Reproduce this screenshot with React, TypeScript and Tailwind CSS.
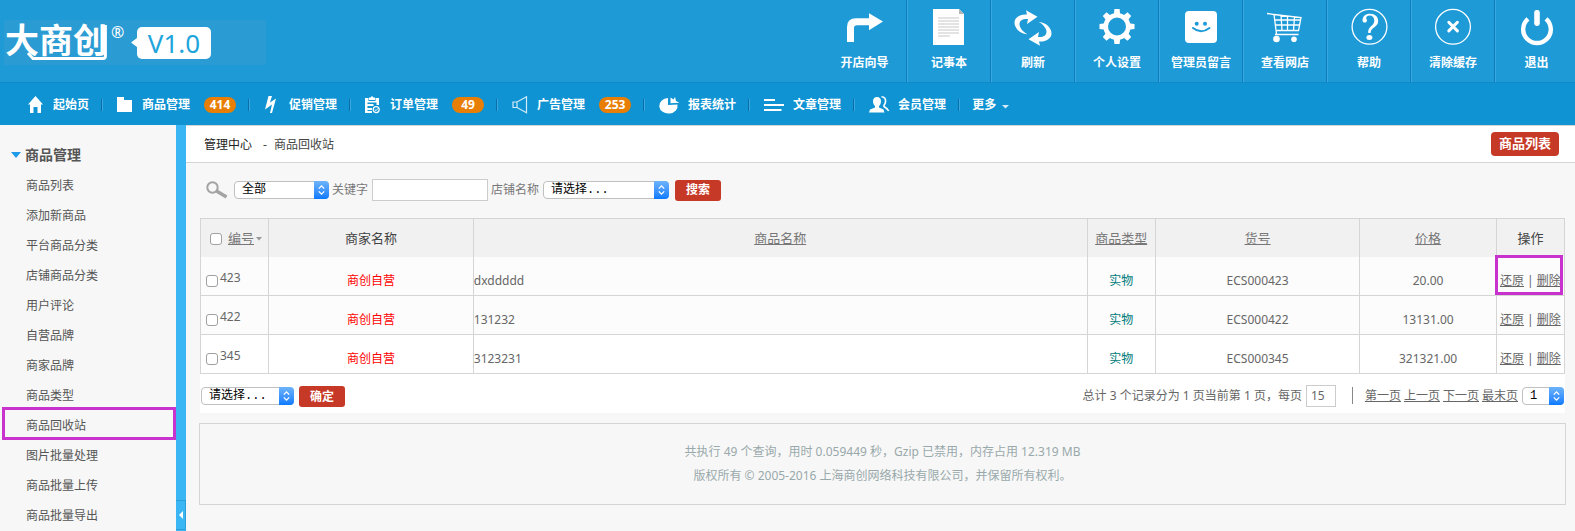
import { useState } from "react";
import type { ReactNode } from "react";

const tools: { label: string; icon: ReactNode }[] = [
  {
    label: "开店向导",
    icon: (
      <path
        fill="#fff"
        d="M0 33V18Q0 9.3 9 9.3H22V4.3L36 12.6L22 21.3V16.3H10Q7 16.3 7 19V33Z"
      />
    ),
  },
  {
    label: "记事本",
    icon: (
      <>
        <path fill="#fff" d="M2 0H28L33 5V36H2Z" />
        <path fill="#b5b5b5" d="M28 0L33 5H28Z" />
        <path
          stroke="#e3e3e3"
          strokeWidth="2"
          d="M7 9H28M7 12H28M7 15H28M7 18H28M7 21H28M7 24H28M7 27H19"
        />
      </>
    ),
  },
  {
    label: "刷新",
    icon: (
      <g fill="#fff">
        <path d="M12.5 25.3C3 24 -.5 18 -.5 13.5C-.5 8.5 5 5 12 5.5L11 1.2L22.5 7.7L12 15L13 10C8 9.5 4.5 11.5 4.5 15C4.5 18.5 7.5 22.5 12.5 25.3Z" />
        <path
          transform="rotate(180 18 19)"
          d="M12.5 25.3C3 24 -.5 18 -.5 13.5C-.5 8.5 5 5 12 5.5L11 1.2L22.5 7.7L12 15L13 10C8 9.5 4.5 11.5 4.5 15C4.5 18.5 7.5 22.5 12.5 25.3Z"
        />
      </g>
    ),
  },
  {
    label: "个人设置",
    icon: (
      <>
        <circle cx="18" cy="17.5" r="11.3" fill="none" stroke="#fff" strokeWidth="4.6" />
        {[0, 45, 90, 135, 180, 225, 270, 315].map((deg) => (
          <path
            key={deg}
            fill="#fff"
            transform={`rotate(${deg} 18 17.5)`}
            d="M15.4 0H20.6L21.2 6H14.8Z"
          />
        ))}
      </>
    ),
  },
  {
    label: "管理员留言",
    icon: (
      <>
        <rect x="2" y="2" width="32" height="32" rx="4" fill="#fff" />
        <circle cx="13.7" cy="14.7" r="2" fill="#1e9ad7" />
        <circle cx="22" cy="14.7" r="2" fill="#1e9ad7" />
        <path
          d="M10 19Q18 25.5 26.5 19"
          fill="none"
          stroke="#1e9ad7"
          strokeWidth="2"
          strokeLinecap="round"
        />
      </>
    ),
  },
  {
    label: "查看网店",
    icon: (
      <>
        <path
          fill="none"
          stroke="#fff"
          strokeWidth="1.3"
          d="M0 4.5L7 5.5L9.5 25M7 5.5L34 8.5L31.5 21.5H9M7.5 11H33.5M8 16H32.5M14 6.5L15 21.5M20.5 7L20.5 21.5M27.5 8L26.5 21.5M8 25.5H31.5"
        />
        <circle cx="9.5" cy="30" r="3.3" fill="#fff" />
        <circle cx="27" cy="30.3" r="2.8" fill="#fff" />
      </>
    ),
  },
  {
    label: "帮助",
    icon: (
      <>
        <circle cx="18.5" cy="17.8" r="17.4" fill="none" stroke="#fff" strokeWidth="1.3" />
        <path
          fill="#fff"
          d="M11.5 11.5C11.5 7.5 14.5 4.8 19 4.8C24 4.8 27.2 7.8 27.2 12C27.2 18.5 19.6 18 19.6 24H17.2C16.6 17.5 23.3 17 23.3 11.8C23.3 8.6 21.5 6.6 18.8 6.6C16.5 6.6 15.2 7.6 15.2 8.9C15.2 9.8 16 10.4 16 11.5C16 12.8 15 13.6 13.8 13.6C12.4 13.6 11.5 12.7 11.5 11.5Z"
        />
        <ellipse cx="18.4" cy="28.6" rx="3" ry="2.5" fill="#fff" />
      </>
    ),
  },
  {
    label: "清除缓存",
    icon: (
      <>
        <circle cx="18" cy="17.8" r="17.4" fill="none" stroke="#fff" strokeWidth="1.3" />
        <path
          stroke="#fff"
          strokeWidth="3"
          strokeLinecap="round"
          d="M13.8 13.3L22.4 21.9M22.4 13.3L13.8 21.9"
        />
      </>
    ),
  },
  {
    label: "退出",
    icon: (
      <>
        <path
          fill="none"
          stroke="#fff"
          strokeWidth="4.4"
          d="M9 9.8A13.8 13.8 0 1 0 27 9.8"
        />
        <rect x="15.2" y="1" width="5.6" height="16" rx="2.4" fill="#fff" />
      </>
    ),
  },
];

const menus: { label: string; badge?: string; wide?: boolean; icon: ReactNode }[] = [
  {
    label: "起始页",
    icon: <path fill="#fff" d="M7.5 0L15 8.5H13V17H9.5V11H5.5V17H2V8.5H0Z" />,
  },
  {
    label: "商品管理",
    badge: "414",
    icon: <path fill="#fff" d="M0 1H7V4H15V16H0Z" />,
  },
  {
    label: "促销管理",
    icon: <path fill="#fff" d="M4.5 0H8L6 6.5L12 2.5L10.5 8L8 17H6L8 8.5L1 13.5Z" />,
  },
  {
    label: "订单管理",
    badge: "49",
    icon: (
      <>
        <path
          fill="#fff"
          d="M0 2H3.5V5H10.5V2H14V9H11.5V6.5H2.5V8H8.5V10H2.5V12H7V14H2.5V15H7V17H0Z"
        />
        <path fill="#fff" d="M4 1.5H5.5L7 0L8.5 1.5H10V4H4Z" />
        <circle cx="11.2" cy="13.6" r="3" fill="none" stroke="#fff" strokeWidth="1.2" />
        <path d="M9.8 13.5L11 14.7L13 12.4" fill="none" stroke="#fff" />
      </>
    ),
  },
  {
    label: "广告管理",
    badge: "253",
    icon: (
      <path
        fill="none"
        stroke="#d5ecf8"
        strokeWidth="1.2"
        d="M1 6H5L14.5 .8V16.8L5 11.5H1ZM5 6V11.5"
      />
    ),
  },
  {
    label: "报表统计",
    wide: true,
    icon: (
      <>
        <path fill="#fff" d="M9 2V9L18.5 8.5A9.2 7.8 0 1 1 9 2Z" />
        <path fill="#fff" d="M11.5 7.3V1.5L14.5 3.5L16 1L17 5L20.5 6.7Z" />
      </>
    ),
  },
  {
    label: "文章管理",
    wide: true,
    icon: <path stroke="#fff" strokeWidth="2" d="M0 4H11M0 9H20M0 14H17.5" />,
  },
  {
    label: "会员管理",
    wide: true,
    icon: (
      <>
        <path
          fill="#fff"
          d="M8 1C10.6 1 12 2.8 12 5.2C12 7.5 11 9 10 10V11.5L14.5 13.5L15.5 16.5H0L1 13.5L6 11.5V10C5 9 4 7.5 4 5.2C4 2.8 5.4 1 8 1Z"
        />
        <path
          fill="none"
          stroke="#fff"
          strokeWidth="1.6"
          d="M12.5 .8C15.5 .8 17 3 16.5 6C16.2 7.8 15.5 8.6 15 9.3V10.5C17.5 12 18.5 12.6 19.7 15"
        />
      </>
    ),
  },
];

const sideItems = [
  "商品列表",
  "添加新商品",
  "平台商品分类",
  "店铺商品分类",
  "用户评论",
  "自营品牌",
  "商家品牌",
  "商品类型",
  "商品回收站",
  "图片批量处理",
  "商品批量上传",
  "商品批量导出",
];

const goods = [
  { id: "423", name: "dxddddd", sn: "ECS000423", price: "20.00" },
  { id: "422", name: "131232", sn: "ECS000422", price: "13131.00" },
  { id: "345", name: "3123231", sn: "ECS000345", price: "321321.00" },
];

// outline used to point out an entry to the reader
function Marker({ className }: { className: string }) {
  return (
    <span
      className={`pointer-events-none absolute border-3 border-[#c733cc] ${className}`}
    />
  );
}

function Select({
  label,
  options,
  className,
}: {
  label: string;
  options: string[];
  className: string;
}) {
  return (
    <span className={`relative inline-flex h-[18px] ${className}`}>
      <select
        aria-label={label}
        className="h-full w-full appearance-none rounded-[4px] border border-[#c0c0c0] bg-white pl-[7px] font-['Liberation_Mono','Noto_Sans_CJK_SC',monospace] text-xs leading-4 text-black"
      >
        {options.map((o) => (
          <option key={o}>{o}</option>
        ))}
      </select>
      <span className="pointer-events-none absolute inset-y-0 right-0 flex w-[15px] items-center justify-center rounded-r-[4px] bg-linear-to-b from-[#6cb3fa] to-[#077aff]">
        <svg width="7" height="10" viewBox="0 0 7 10" fill="none" stroke="#fff" strokeWidth="1.3">
          <path d="M.8 3.6L3.5 .9L6.2 3.6M.8 6.4L3.5 9.1L6.2 6.4" />
        </svg>
      </span>
    </span>
  );
}

function Checkbox({ label }: { label: string }) {
  return (
    <input
      type="checkbox"
      aria-label={label}
      className="size-3 shrink-0 appearance-none rounded-[3px] border border-[#a0a0a0] bg-white checked:bg-[#077aff]"
    />
  );
}

function Logo() {
  return (
    <div className="mt-5 ml-1 flex h-[45px] w-[262px] bg-[#2b9bd3] pl-px">
      <div className="relative h-10 w-[102px]">
        <span className="block text-[34px] leading-10 font-bold whitespace-nowrap text-white">
          大商创
        </span>
        <svg className="absolute inset-0" width="102" height="40" viewBox="0 0 102 40">
          <path
            d="M23 33L28 38.4H98Q100.4 38.4 100.4 36V5"
            fill="none"
            stroke="#fff"
            strokeWidth="3"
          />
        </svg>
      </div>
      <span className="ml-1 w-4 pt-1 text-base leading-4 text-white">®</span>
      <svg className="mt-[18px] ml-1" width="6" height="9" viewBox="0 0 6 9">
        <path d="M6 0V9L0 4.5Z" fill="#fff" />
      </svg>
      <span className="mt-[7px] h-8 w-[74px] rounded-[5px] bg-white text-center text-[26px] leading-8 text-[#1ea5dc]">
        V1.0
      </span>
    </div>
  );
}

function TopBar() {
  return (
    <div className="flex h-[82px] justify-between bg-[#1e9ad7]">
      <Logo />
      <ul className="flex">
        {tools.map((t) => (
          <li
            key={t.label}
            className="w-[84px] border-r border-[#0d7dbd] border-l border-l-[#3aa9e2] first:border-l-0 last:w-20 last:border-r-0 last:pl-[2px]"
          >
            <a href="#" className="flex flex-col items-center pt-[9px]">
              <svg width="36" height="36" viewBox="0 0 36 36" className="overflow-visible">
                {t.icon}
              </svg>
              <span className="mt-2 text-xs leading-5 font-bold text-white">
                {t.label}
              </span>
            </a>
          </li>
        ))}
      </ul>
    </div>
  );
}

function NavBar() {
  return (
    <nav className="flex h-[43px] items-center border-t border-[#1089c6] bg-[#0f93d2] pt-[2px] pl-[14px] text-xs font-bold text-white">
      {menus.map((m) => (
        <div key={m.label} className="flex items-center">
          <a href="#" className="flex h-5 items-center pr-3 pl-[14px]">
            <svg
              height="17"
              viewBox={m.wide ? "0 0 20 17" : "0 0 15 17"}
              className={
                m.wide
                  ? "mr-[9px] mb-[2px] w-5 overflow-visible"
                  : "mr-[10px] mb-[2px] w-[15px] overflow-visible"
              }
            >
              {m.icon}
            </svg>
            {m.label}
            {m.badge && (
              <span className="ml-[14px] h-4 w-8 rounded-full bg-[#e87e04] text-center leading-4">
                {m.badge}
              </span>
            )}
          </a>
          <span className="h-3 w-[2px] border-r border-l border-r-[#35a9e0] border-l-[#0a6fa8]" />
        </div>
      ))}
      <a href="#" className="flex items-center gap-[6px] pl-3">
        更多
        <svg width="7" height="4" viewBox="0 0 7 4" className="mt-[3px]">
          <path d="M0 0H7L3.5 3.5Z" fill="#d5ecf8" />
        </svg>
      </a>
    </nav>
  );
}

function Sidebar() {
  return (
    <aside className="w-44 shrink-0 pt-[15px] text-[#555]">
      <h2 className="flex h-[30px] items-center gap-1 pl-[11px] text-sm font-bold">
        <svg width="10" height="6" viewBox="0 0 10 6">
          <path d="M0 0H10L5 6Z" fill="#1e9be8" />
        </svg>
        商品管理
      </h2>
      <ul className="text-xs">
        {sideItems.map((item) => (
          <li key={item} className="relative h-[30px] pl-[26px] leading-8">
            <a href="#">{item}</a>
            {item === "商品回收站" && (
              <Marker className="top-[-3px] right-0 left-[2px] h-[33px]" />
            )}
          </li>
        ))}
      </ul>
    </aside>
  );
}

function SearchForm() {
  const [keyword, setKeyword] = useState("");

  return (
    <form
      className="mt-[15px] flex h-6 items-center pl-[6px] text-xs text-[#777]"
      onSubmit={(e) => e.preventDefault()}
    >
      <svg width="22" height="18" viewBox="0 0 22 18" fill="none" stroke="#a3a3a3">
        <circle cx="6.5" cy="6.5" r="5.2" strokeWidth="2" />
        <path d="M10.5 10L20.5 16" strokeWidth="3.4" />
      </svg>
      <Select label="分类" options={["全部"]} className="ml-[6px] w-[95px]" />
      <label htmlFor="keyword" className="ml-[3px]">
        关键字
      </label>
      <input
        id="keyword"
        value={keyword}
        onChange={(e) => setKeyword(e.target.value)}
        className="ml-1 h-[22px] w-[116px] border border-[#ccc] bg-white px-1"
      />
      <span className="ml-[3px]">店铺名称</span>
      <Select label="店铺名称" options={["请选择..."]} className="ml-1 w-[126px]" />
      <button
        type="submit"
        className="ml-[6px] h-[21px] w-[46px] rounded-[3px] bg-[#c63927] font-bold text-white"
      >
        搜索
      </button>
    </form>
  );
}

function GoodsTable() {
  return (
    <table className="mt-4 w-full table-fixed border-collapse border border-[#d5d5d5] bg-[#fcfcfc] text-center text-xs text-[#666]">
      <thead>
        <tr className="h-[38px] bg-[#f1f1f1] text-[13px] text-[#777] *:border-x *:border-[#d5d5d5] *:pt-[2px] *:font-normal">
          <th className="w-[5%]">
            <div className="flex items-center pl-[9px]">
              <Checkbox label="全选" />
              <a href="#" className="ml-[6px] underline">
                编号
              </a>
              <svg width="6" height="4" viewBox="0 0 6 4" className="ml-[2px]">
                <path d="M0 0H6L3 3.5Z" fill="#999" />
              </svg>
            </div>
          </th>
          <th className="w-[15%] text-[#444]">商家名称</th>
          <th className="w-[45%]">
            <a href="#" className="underline">商品名称</a>
          </th>
          <th className="w-[5%]">
            <a href="#" className="underline">商品类型</a>
          </th>
          <th className="w-[15%]">
            <a href="#" className="underline">货号</a>
          </th>
          <th className="w-[10%]">
            <a href="#" className="underline">价格</a>
          </th>
          <th className="w-[5%] text-[#444]">操作</th>
        </tr>
      </thead>
      <tbody>
        {goods.map((g, i) => (
          <tr
            key={g.id}
            className="h-[39px] last:bg-white *:border-x *:border-b *:border-[#d5d5d5] *:pt-[10px]"
          >
            <td>
              <div className="flex items-center pl-[5px]">
                <Checkbox label={g.id} />
                <span className="ml-[2px] pb-[6px]">{g.id}</span>
              </div>
            </td>
            <td className="text-[#f00]">商创自营</td>
            <td className="text-left">{g.name}</td>
            <td className="text-[#007a7a]">实物</td>
            <td>{g.sn}</td>
            <td>{g.price}</td>
            <td className="relative whitespace-nowrap">
              <a href="#" className="underline">还原</a> |{" "}
              <a href="#" className="underline">删除</a>
              {i === 0 && <Marker className="top-[-2px] right-px bottom-0 left-[-2px]" />}
            </td>
          </tr>
        ))}
      </tbody>
    </table>
  );
}

function Pager() {
  return (
    <div className="flex h-[39px] items-center justify-between bg-white pt-1 text-xs text-[#666]">
      <div className="flex items-center pl-px">
        <Select label="批量操作" options={["请选择..."]} className="w-[93px]" />
        <button className="mt-[2px] ml-[5px] h-[21px] w-[46px] rounded-[3px] bg-[#c63927] font-bold text-white">
          确定
        </button>
      </div>
      <div className="flex items-center">
        <label htmlFor="page-size">总计 3 个记录分为 1 页当前第 1 页，每页</label>
        <input
          id="page-size"
          defaultValue="15"
          className="ml-1 h-[22px] w-[30px] border border-[#ccc] bg-white pl-1"
        />
        <span className="mr-3 ml-4 h-[17px] w-px bg-[#888]" />
        <div className="mr-1 flex gap-[3px] underline">
          <a href="#">第一页</a>
          <a href="#">上一页</a>
          <a href="#">下一页</a>
          <a href="#">最末页</a>
        </div>
        <Select label="页码" options={["1"]} className="mr-px w-[42px]" />
      </div>
    </div>
  );
}

export default function App() {
  return (
    <div className="flex min-h-screen flex-col bg-[#f7f7f7] font-['Noto_Sans','Noto_Sans_CJK_SC',sans-serif]">
      <header>
        <TopBar />
        <NavBar />
      </header>
      <div className="flex flex-1">
        <Sidebar />
        <div className="flex w-[10px] shrink-0 flex-col justify-end bg-[#39b6f3]">
          <button
            aria-label="收起菜单"
            className="mb-px flex h-[30px] items-center justify-center border border-l-0 border-[#2a9fd8]"
          >
            <svg width="4" height="8" viewBox="0 0 4 8">
              <path d="M4 0V8L0 4Z" fill="#fff" />
            </svg>
          </button>
        </div>
        <main className="min-w-0 flex-1">
          <div className="flex h-[38px] items-center justify-between border-y border-[#d5d5d5] bg-white pr-4 pl-[18px]">
            <p className="flex gap-[7px] pt-[2px] text-xs text-[#444]">
              <a href="#" className="mr-1 text-[#222]">管理中心</a>
              <span>-</span>
              <span>商品回收站</span>
            </p>
            <button className="h-6 w-[68px] rounded-[4px] bg-[#c63927] text-[13px] font-bold text-white">
              商品列表
            </button>
          </div>
          <div className="pr-[10px] pl-[14px]">
            <SearchForm />
            <GoodsTable />
            <Pager />
          </div>
          <footer className="mt-[10px] mr-[9px] ml-[13px] border border-[#d5d5d5] py-4 text-center text-xs leading-6 text-[#99a9ab]">
            <p>共执行 49 个查询，用时 0.059449 秒，Gzip 已禁用，内存占用 12.319 MB</p>
            <p>版权所有 © 2005-2016 上海商创网络科技有限公司，并保留所有权利。</p>
          </footer>
        </main>
      </div>
    </div>
  );
}
